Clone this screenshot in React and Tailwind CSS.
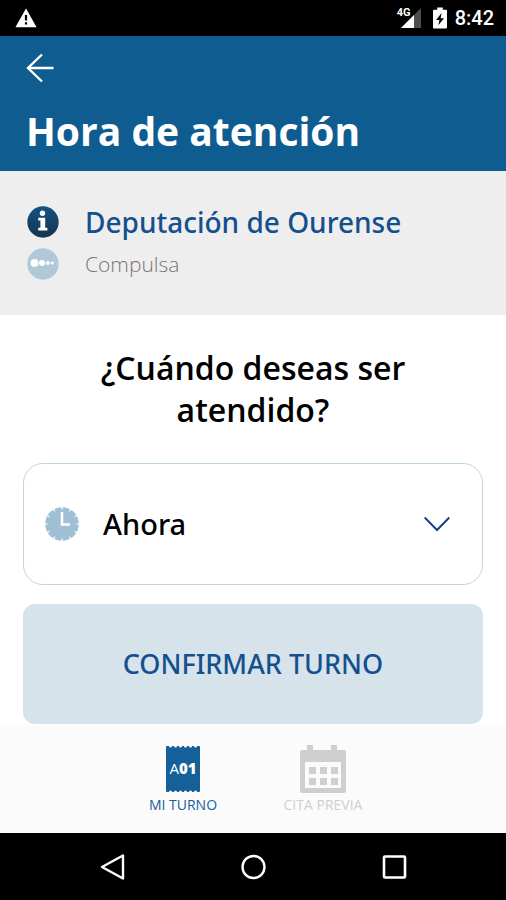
import React, { useState } from "react";

const WarningIcon = () => (
  <svg width="22" height="20" viewBox="0 0 22 20" aria-hidden="true">
    <path d="M11 0.5 21.6 19.2H0.4Z" fill="#fff" />
    <path d="M9.9 7h2.2v5.6H9.9zM9.9 14.2h2.2v2.2H9.9z" fill="#000" />
  </svg>
);

const SignalIcon = () => (
  <svg width="20" height="20" viewBox="0 0 20 20" aria-hidden="true">
    <path d="M20 0V20H0Z" fill="#4d4d4d" />
    <path d="M13 7V20H0Z" fill="#fff" />
  </svg>
);

const BatteryIcon = () => (
  <svg width="14" height="22" viewBox="0 0 14 22" aria-hidden="true">
    <path
      d="M4.2 0.5h5.6v2.2h3.2a1 1 0 0 1 1 1V20.5a1 1 0 0 1-1 1H1a1 1 0 0 1-1-1V3.7a1 1 0 0 1 1-1h3.2z"
      fill="#fff"
    />
    <path d="M8.6 6 3 13h3.4L5.4 18.3 11 11.2H7.6z" fill="#000" />
  </svg>
);

const BackArrow = () => (
  <svg
    width="28"
    height="30"
    viewBox="0 0 28 30"
    fill="none"
    stroke="#fff"
    strokeWidth="2.4"
    aria-hidden="true"
  >
    <path d="M27.5 15H2M16 1.5 2 15l14 13.5" />
  </svg>
);

const InfoIcon = () => (
  <svg width="32" height="32" viewBox="0 0 32 32" aria-hidden="true">
    <defs>
      <linearGradient id="info-fill" x1="0" y1="0" x2="0" y2="1">
        <stop offset="0" stopColor="#125384" />
        <stop offset="1" stopColor="#16354f" />
      </linearGradient>
    </defs>
    <circle cx="16" cy="16" r="15.7" fill="url(#info-fill)" />
    <circle cx="15.5" cy="7.3" r="2.7" fill="#fff" />
    <path d="M11.2 11.8h7v10h2.2v2.8h-9.2v-2.8h2.2v-7.2h-2.2z" fill="#fff" />
  </svg>
);

const DotsIcon = () => (
  <svg width="32" height="32" viewBox="0 0 32 32" aria-hidden="true">
    <circle cx="16" cy="16" r="15.7" fill="#b1c8d8" />
    <g fill="#fff">
      <circle cx="7.5" cy="15" r="3.9" />
      <circle cx="15" cy="15" r="3" />
      <circle cx="20.8" cy="15" r="2" />
      <circle cx="25.3" cy="15" r="1.6" />
    </g>
  </svg>
);

const ClockIcon = () => (
  <svg width="34" height="34" viewBox="0 0 34 34" aria-hidden="true">
    <circle cx="17" cy="17" r="16.8" fill="#9fbfd5" />
    <g stroke="#fff" strokeWidth="1.3">
      {Array.from({ length: 12 }).map((_, i) => (
        <path key={i} d="M17 0V2.4" transform={`rotate(${i * 30} 17 17)`} />
      ))}
    </g>
    <path d="M17 5V17.5H25" fill="none" stroke="#fff" strokeWidth="2.6" />
  </svg>
);

const ChevronIcon = () => (
  <svg
    width="26"
    height="16"
    viewBox="0 0 26 16"
    fill="none"
    stroke="#17418c"
    strokeWidth="2"
    aria-hidden="true"
  >
    <path d="M0.7 1.5 13 14 25.3 1.5" />
  </svg>
);

const TicketIcon = () => (
  <svg width="46" height="48" viewBox="0 0 46 48" aria-hidden="true">
    <rect x="6" y="1" width="34" height="46" rx="1" fill="#16609a" />
    <g fill="#fbfbfb">
      {[10.5, 15.5, 20.5, 25.5, 30.5, 35.5].map((x) => (
        <React.Fragment key={x}>
          <circle cx={x} cy="1" r="1.6" />
          <circle cx={x} cy="47" r="1.6" />
        </React.Fragment>
      ))}
    </g>
    <text
      x="23"
      y="29"
      textAnchor="middle"
      fill="#fff"
      fontSize="15"
      fontFamily="Open Sans, sans-serif"
    >
      <tspan fontWeight="400">A</tspan>
      <tspan fontWeight="800">01</tspan>
    </text>
  </svg>
);

const CalendarIcon = () => (
  <svg width="46" height="48" viewBox="0 0 46 48" aria-hidden="true">
    <g fill="#cfcfcf">
      <rect x="7" y="0" width="6" height="7" />
      <rect x="31" y="0" width="6" height="7" />
      <rect x="0" y="5" width="46" height="43" rx="2" />
    </g>
    <path d="M5 17h36v26H5z" fill="#fbfbfb" />
    <g fill="#cfcfcf">
      {[22, 33].map((y) =>
        [9, 20, 31].map((x) => (
          <rect key={`${x}-${y}`} x={x} y={y} width="7" height="7" />
        ))
      )}
    </g>
  </svg>
);

const StatusBar = () => (
  <div className="flex h-9 items-center justify-between bg-black pl-[15px] pr-3 text-white">
    <WarningIcon />
    <div className="flex items-center">
      <span className="relative mr-3 block">
        <SignalIcon />
        <span className="absolute -left-1 -top-px bg-black pr-px font-['Roboto',sans-serif] text-[11px] font-bold leading-[11px]">
          4G
        </span>
      </span>
      <BatteryIcon />
      <span className="ml-2 font-['Roboto',sans-serif] text-xl font-medium leading-6">
        8:42
      </span>
    </div>
  </div>
);

const tabs = [
  { id: "turno", label: "MI TURNO", icon: TicketIcon },
  { id: "cita", label: "CITA PREVIA", icon: CalendarIcon },
];

const TabBar = ({ active, onChange }) => (
  <nav className="flex justify-center gap-5 bg-[#fbfbfb] pb-5 pt-5">
    {tabs.map(({ id, label, icon: Icon }) => (
      <button
        key={id}
        type="button"
        onClick={() => onChange(id)}
        className={`flex w-30 flex-col items-center gap-1 text-sm leading-4 ${
          active === id ? "text-[#16609a]" : "text-[#cfcfcf]"
        }`}
      >
        <Icon />
        <span>{label}</span>
      </button>
    ))}
  </nav>
);

const SystemNav = () => (
  <div className="flex h-[67px] items-center justify-center gap-[116px] bg-black">
    <button type="button" aria-label="Atrás">
      <svg width="25" height="28" viewBox="0 0 25 28" fill="none" stroke="#fff" strokeWidth="2.4" strokeLinejoin="round">
        <path d="M23 2.5v23L2 14z" />
      </svg>
    </button>
    <button type="button" aria-label="Inicio">
      <svg width="25" height="28" viewBox="0 0 25 28" fill="none" stroke="#fff" strokeWidth="2.4">
        <circle cx="12.5" cy="14" r="11" />
      </svg>
    </button>
    <button type="button" aria-label="Recientes">
      <svg width="25" height="28" viewBox="0 0 25 28" fill="none" stroke="#fff" strokeWidth="2.6">
        <rect x="2" y="3.5" width="21" height="21" rx="1" />
      </svg>
    </button>
  </div>
);

const App = () => {
  const [hora, setHora] = useState("ahora");
  const [tab, setTab] = useState("turno");

  return (
    <div className="flex min-h-screen flex-col bg-white font-['Open_Sans',sans-serif]">
      <StatusBar />

      <header className="bg-[#0f5c90] px-[26px] pb-4 pt-[17px] text-white">
        <button type="button" aria-label="Volver" className="block">
          <BackArrow />
        </button>
        <h1 className="mt-6 text-[39px] font-bold leading-[48px]">
          Hora de atención
        </h1>
      </header>

      <section className="bg-[#eeeeee] px-[27px] pb-[30px] pt-[30px]">
        <div className="flex items-center gap-[26px]">
          <InfoIcon />
          <h2 className="font-['Noto_Sans',sans-serif] text-[28px] font-medium leading-[42px] text-[#15508e]">
            Deputación de Ourense
          </h2>
        </div>
        <div className="flex items-center gap-[26px]">
          <DotsIcon />
          <p className="text-[21px] font-light leading-[42px] text-[#777777]">
            Compulsa
          </p>
        </div>
      </section>

      <main className="flex flex-1 flex-col px-[23px] pt-8">
        <label
          htmlFor="hora"
          className="mx-auto block max-w-[360px] text-center text-[32px] font-semibold leading-[42px] text-black"
        >
          ¿Cuándo deseas ser atendido?
        </label>

        <div className="relative mt-8">
          <span className="pointer-events-none absolute inset-y-0 left-[22px] flex items-center">
            <ClockIcon />
          </span>
          <select
            id="hora"
            value={hora}
            onChange={(e) => setHora(e.target.value)}
            className="block w-full appearance-none rounded-[20px] border border-[#bfd6e4] bg-transparent py-10 pl-[79px] pr-16 font-['Noto_Sans',sans-serif] text-[29px] font-medium leading-10 text-black"
          >
            <option value="ahora">Ahora</option>
          </select>
          <span className="pointer-events-none absolute inset-y-0 right-[33px] flex items-center">
            <ChevronIcon />
          </span>
        </div>

        <button
          type="button"
          className="mt-[19px] w-full rounded-xl bg-[#d7e3eb] py-10 font-['Noto_Sans',sans-serif] text-[27px] font-medium leading-10 text-[#15508e]"
        >
          CONFIRMAR TURNO
        </button>
      </main>

      <TabBar active={tab} onChange={setTab} />
      <SystemNav />
    </div>
  );
};

export default App;
